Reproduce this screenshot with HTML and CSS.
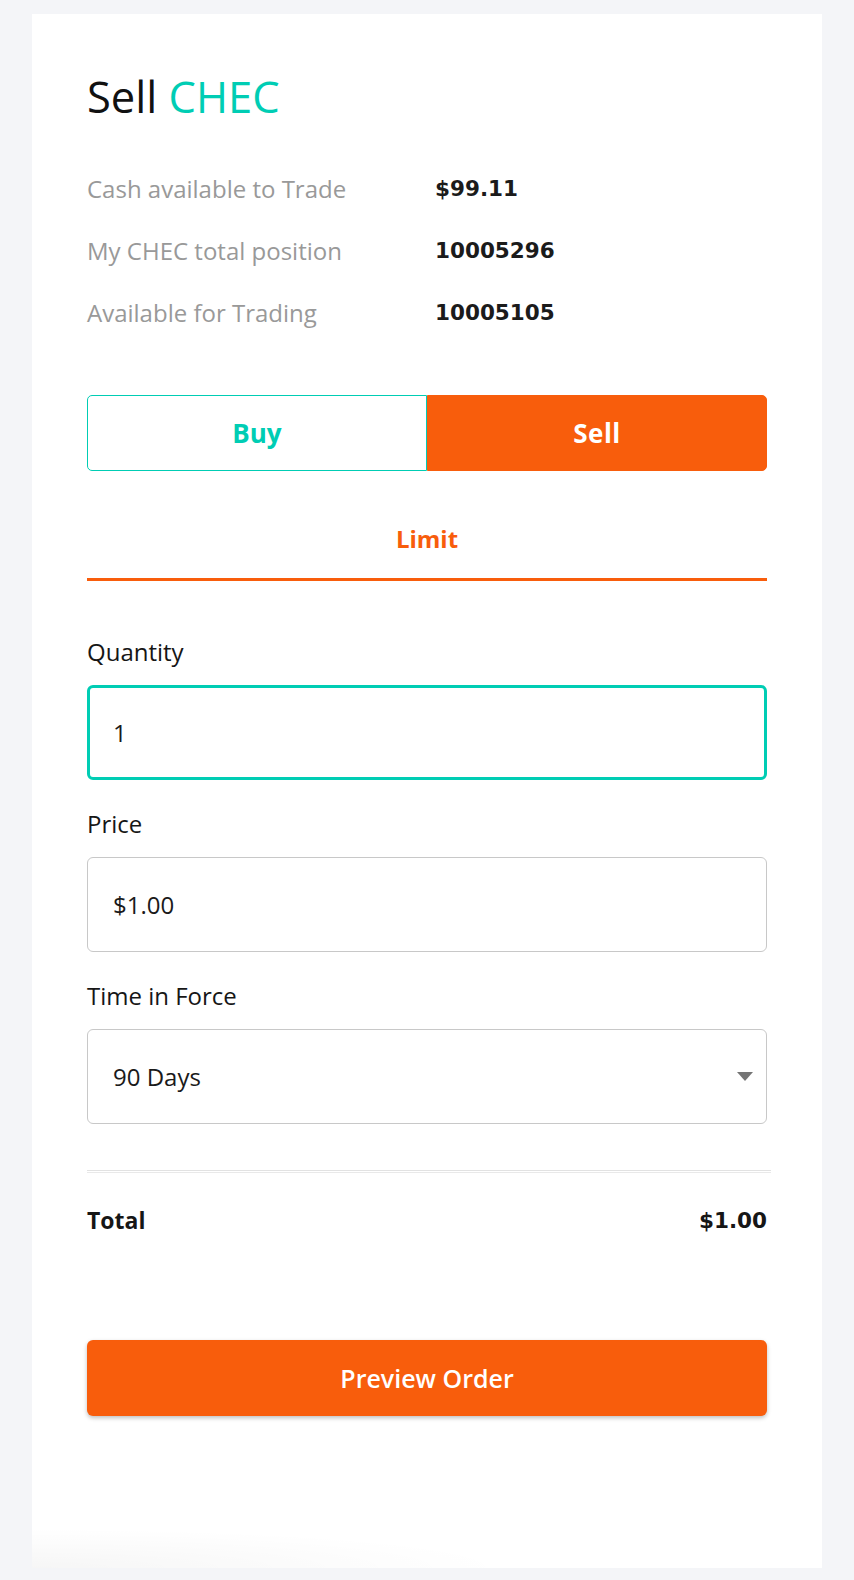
FILE: index.html
```html
<!DOCTYPE html>
<html lang="en">
<head>
<meta charset="utf-8">
<title>Sell CHEC</title>
<link rel="stylesheet" href="styles.css">
</head>
<body>
<main class="card">
  <h1 class="title">Sell <span class="accent">CHEC</span></h1>

  <dl class="info">
    <div class="info-row"><dt>Cash available to Trade</dt><dd>$99.11</dd></div>
    <div class="info-row"><dt>My CHEC total position</dt><dd>10005296</dd></div>
    <div class="info-row"><dt>Available for Trading</dt><dd>10005105</dd></div>
  </dl>

  <div class="toggle">
    <button class="toggle-btn buy">Buy</button>
    <button class="toggle-btn sell">Sell</button>
  </div>

  <div class="tabs"><div class="tab active">Limit</div></div>

  <div class="fields">
    <div class="field">
      <label class="field-label">Quantity</label>
      <div class="input focused">1</div>
    </div>
    <div class="field">
      <label class="field-label">Price</label>
      <div class="input">$1.00</div>
    </div>
    <div class="field">
      <label class="field-label">Time in Force</label>
      <div class="input select">
        <span>90 Days</span>
        <svg class="caret" width="16" height="9" viewBox="0 0 16 9"><path d="M0 0h16L8 9z" fill="#757575"/></svg>
      </div>
    </div>
  </div>

  <div class="divider"></div>

  <div class="total"><span class="total-label">Total</span><span class="total-value">$1.00</span></div>

  <button class="preview">Preview Order</button>
</main>
</body>
</html>
```

FILE: styles.css
```css
* { box-sizing: border-box; }
html, body { margin: 0; padding: 0; }
body {
  background: #f4f5f8;
  font-family: "Open Sans", Roboto, Arial, sans-serif;
  color: #161616;
  padding: 14px 32px 12px;
}
.card {
  background:
    radial-gradient(ellipse 480px 40px at 0% 100%, rgba(0,0,0,0.035), rgba(0,0,0,0)),
    #fff;
  padding: 58px 55px 0;
  height: 1554px;
}
.title {
  margin: 0;
  font-size: 43.5px;
  font-weight: 400;
  line-height: 50px;
  color: #111;
}
.accent { color: #00cdb4; }

.info { margin: 35px 0 0; }
.info-row {
  display: grid;
  grid-template-columns: 348px 1fr;
  height: 62px;
  align-items: center;
}
.info-row dt { color: #999; font-size: 24px; }
.info-row dd {
  margin: 0;
  font-family: "DejaVu Sans", sans-serif;
  font-size: 21.5px;
  font-weight: 700;
  color: #1b1b1b;
}

.toggle {
  display: flex;
  margin-top: 52px;
  height: 76px;
}
.toggle-btn {
  flex: 1;
  font-family: inherit;
  font-size: 26px;
  font-weight: 700;
  border: 1px solid #00cdb4;
  cursor: pointer;
}
.buy {
  background: #fff;
  color: #00cdb4;
  border-radius: 5px 0 0 5px;
}
.sell {
  background: #f85d0c;
  border-color: #f85d0c;
  color: #fff;
  border-radius: 0 5px 5px 0;
  letter-spacing: 0.5px;
}

.tabs { margin-top: 28px; }
.tab {
  height: 82px;
  line-height: 80px;
  text-align: center;
  font-size: 24px;
  font-weight: 700;
  color: #f85d0c;
  border-bottom: 3px solid #f85d0c;
}

.fields {
  margin-top: 56px;
  display: flex;
  flex-direction: column;
  gap: 29px;
}
.field { display: flex; flex-direction: column; }
.field-label {
  font-size: 24px;
  line-height: 30px;
  margin-bottom: 18px;
}
.input {
  height: 95px;
  border: 1px solid #c8c8c8;
  border-radius: 6px;
  display: flex;
  align-items: center;
  padding: 0 25px;
  font-size: 24px;
  color: #1a1a1a;
}
.input.focused { border: 3px solid #00cdb4; padding-left: 23px; }
.select { justify-content: space-between; padding-right: 13px; }

.divider {
  margin-top: 46px;
  margin-right: -4px;
  height: 3px;
  border-top: 1px solid #e2e2e2;
  border-bottom: 1px solid #e9e9e9;
}

.total {
  display: flex;
  justify-content: space-between;
  align-items: center;
  margin-top: 32px;
  height: 30px;
}
.total-label { font-size: 23px; font-weight: 700; }
.total-value {
  font-family: "DejaVu Sans", sans-serif;
  font-size: 21.5px;
  font-weight: 700;
}

.preview {
  display: block;
  width: 100%;
  margin-top: 105px;
  height: 76px;
  border: none;
  border-radius: 6px;
  background: #f85d0c;
  color: #fff;
  font-family: inherit;
  font-size: 25px;
  font-weight: 600;
  box-shadow: 0 2px 4px rgba(0,0,0,0.25);
}
```
